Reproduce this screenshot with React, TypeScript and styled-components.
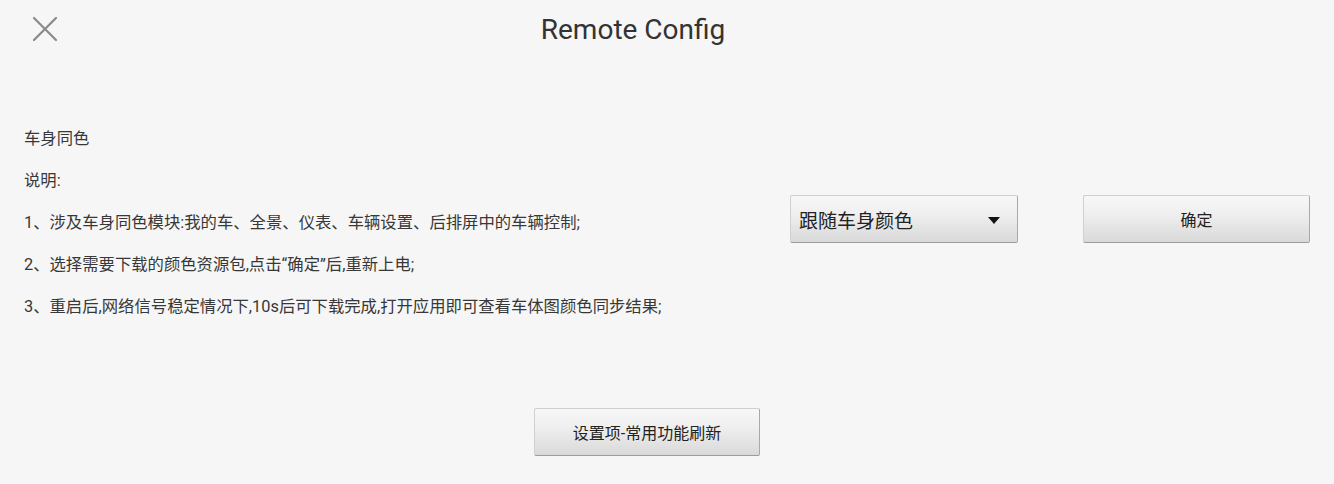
import React from "react";

import styled, { createGlobalStyle } from "styled-components";

const notes = [
  "车身同色",
  "说明:",
  "1、涉及车身同色模块:我的车、全景、仪表、车辆设置、后排屏中的车辆控制;",
  "2、选择需要下载的颜色资源包,点击“确定”后,重新上电;",
  "3、重启后,网络信号稳定情况下,10s后可下载完成,打开应用即可查看车体图颜色同步结果;",
];

export default function App() {
  return (
    <>
      <GlobalStyle />
      <Page>
        <Header>
          <CloseButton aria-label="close">
            <svg width="26" height="26" viewBox="0 0 26 26">
              <path
                d="M2 2 L24 24 M24 2 L2 24"
                stroke="#8a8a8a"
                strokeWidth="2.2"
                strokeLinecap="round"
              />
            </svg>
          </CloseButton>
          <Title>Remote Config</Title>
          <span />
        </Header>
        <Body>
          {notes.map((text, i) => (
            <Note key={i} row={i + 1}>
              {text}
            </Note>
          ))}
          <Spinner>
            <SpinnerText>跟随车身颜色</SpinnerText>
            <Arrow />
          </Spinner>
          <ConfirmButton>确定</ConfirmButton>
        </Body>
        <Footer>
          <Button>设置项-常用功能刷新</Button>
        </Footer>
      </Page>
    </>
  );
}

const GlobalStyle = createGlobalStyle`
  html, body {
    margin: 0;
    padding: 0;
    background: #f6f6f6;
  }
  body {
    font-family: Roboto, "Noto Sans CJK SC", sans-serif;
    color: #333333;
  }
`;

const Page = styled.div`
  width: 1334px;
  height: 484px;
  background: #f6f6f6;
  display: flex;
  flex-direction: column;
  overflow: hidden;
`;

const Header = styled.div`
  height: 60px;
  padding-right: 68px;
  display: grid;
  grid-template-columns: 1fr auto 1fr;
  align-items: center;
`;

const CloseButton = styled.div`
  width: 26px;
  height: 26px;
  margin-left: 32px;
  margin-top: -3px;
  display: flex;
`;

const Title = styled.div`
  font-family: Roboto, "Noto Sans", sans-serif;
  font-size: 28px;
  color: #333333;
  margin-top: -2px;
`;

const Body = styled.div`
  margin-top: 58px;
  padding-left: 24px;
  display: grid;
  grid-template-columns: 766px 227px 66px 227px;
  grid-template-rows: repeat(5, 42px);
`;

const Note = styled.div<{ row: number }>`
  grid-column: 1;
  grid-row: ${(p) => p.row};
  font-size: 16.35px;
  line-height: 42px;
  white-space: nowrap;
  color: #383838;
`;

const Button = styled.div`
  box-sizing: border-box;
  width: 226px;
  height: 48px;
  display: flex;
  align-items: center;
  justify-content: center;
  font-size: 16px;
  color: #222222;
  background: linear-gradient(#f7f7f7 0%, #efefef 40%, #d9d9d9 100%);
  border: 1px solid #d0d0d0;
  border-right-color: #a9a9a9;
  border-bottom-color: #9c9c9c;
  border-radius: 2px;
`;

const ConfirmButton = styled(Button)`
  grid-column: 4;
  grid-row: 3;
  align-self: center;
  width: 227px;
  margin-bottom: 8px;
`;

const Spinner = styled(Button)`
  grid-column: 2;
  grid-row: 3;
  align-self: center;
  width: 228px;
  margin-bottom: 8px;
  justify-content: space-between;
  padding: 0 17px 0 8px;
`;

const SpinnerText = styled.span`
  font-size: 19px;
  color: #222222;
`;

const Arrow = styled.span`
  width: 0;
  height: 0;
  border-left: 6.5px solid transparent;
  border-right: 6.5px solid transparent;
  border-top: 7px solid #111111;
  margin-top: 2px;
`;

const Footer = styled.div`
  margin-top: 80px;
  padding-left: 534px;
  display: flex;
`;
